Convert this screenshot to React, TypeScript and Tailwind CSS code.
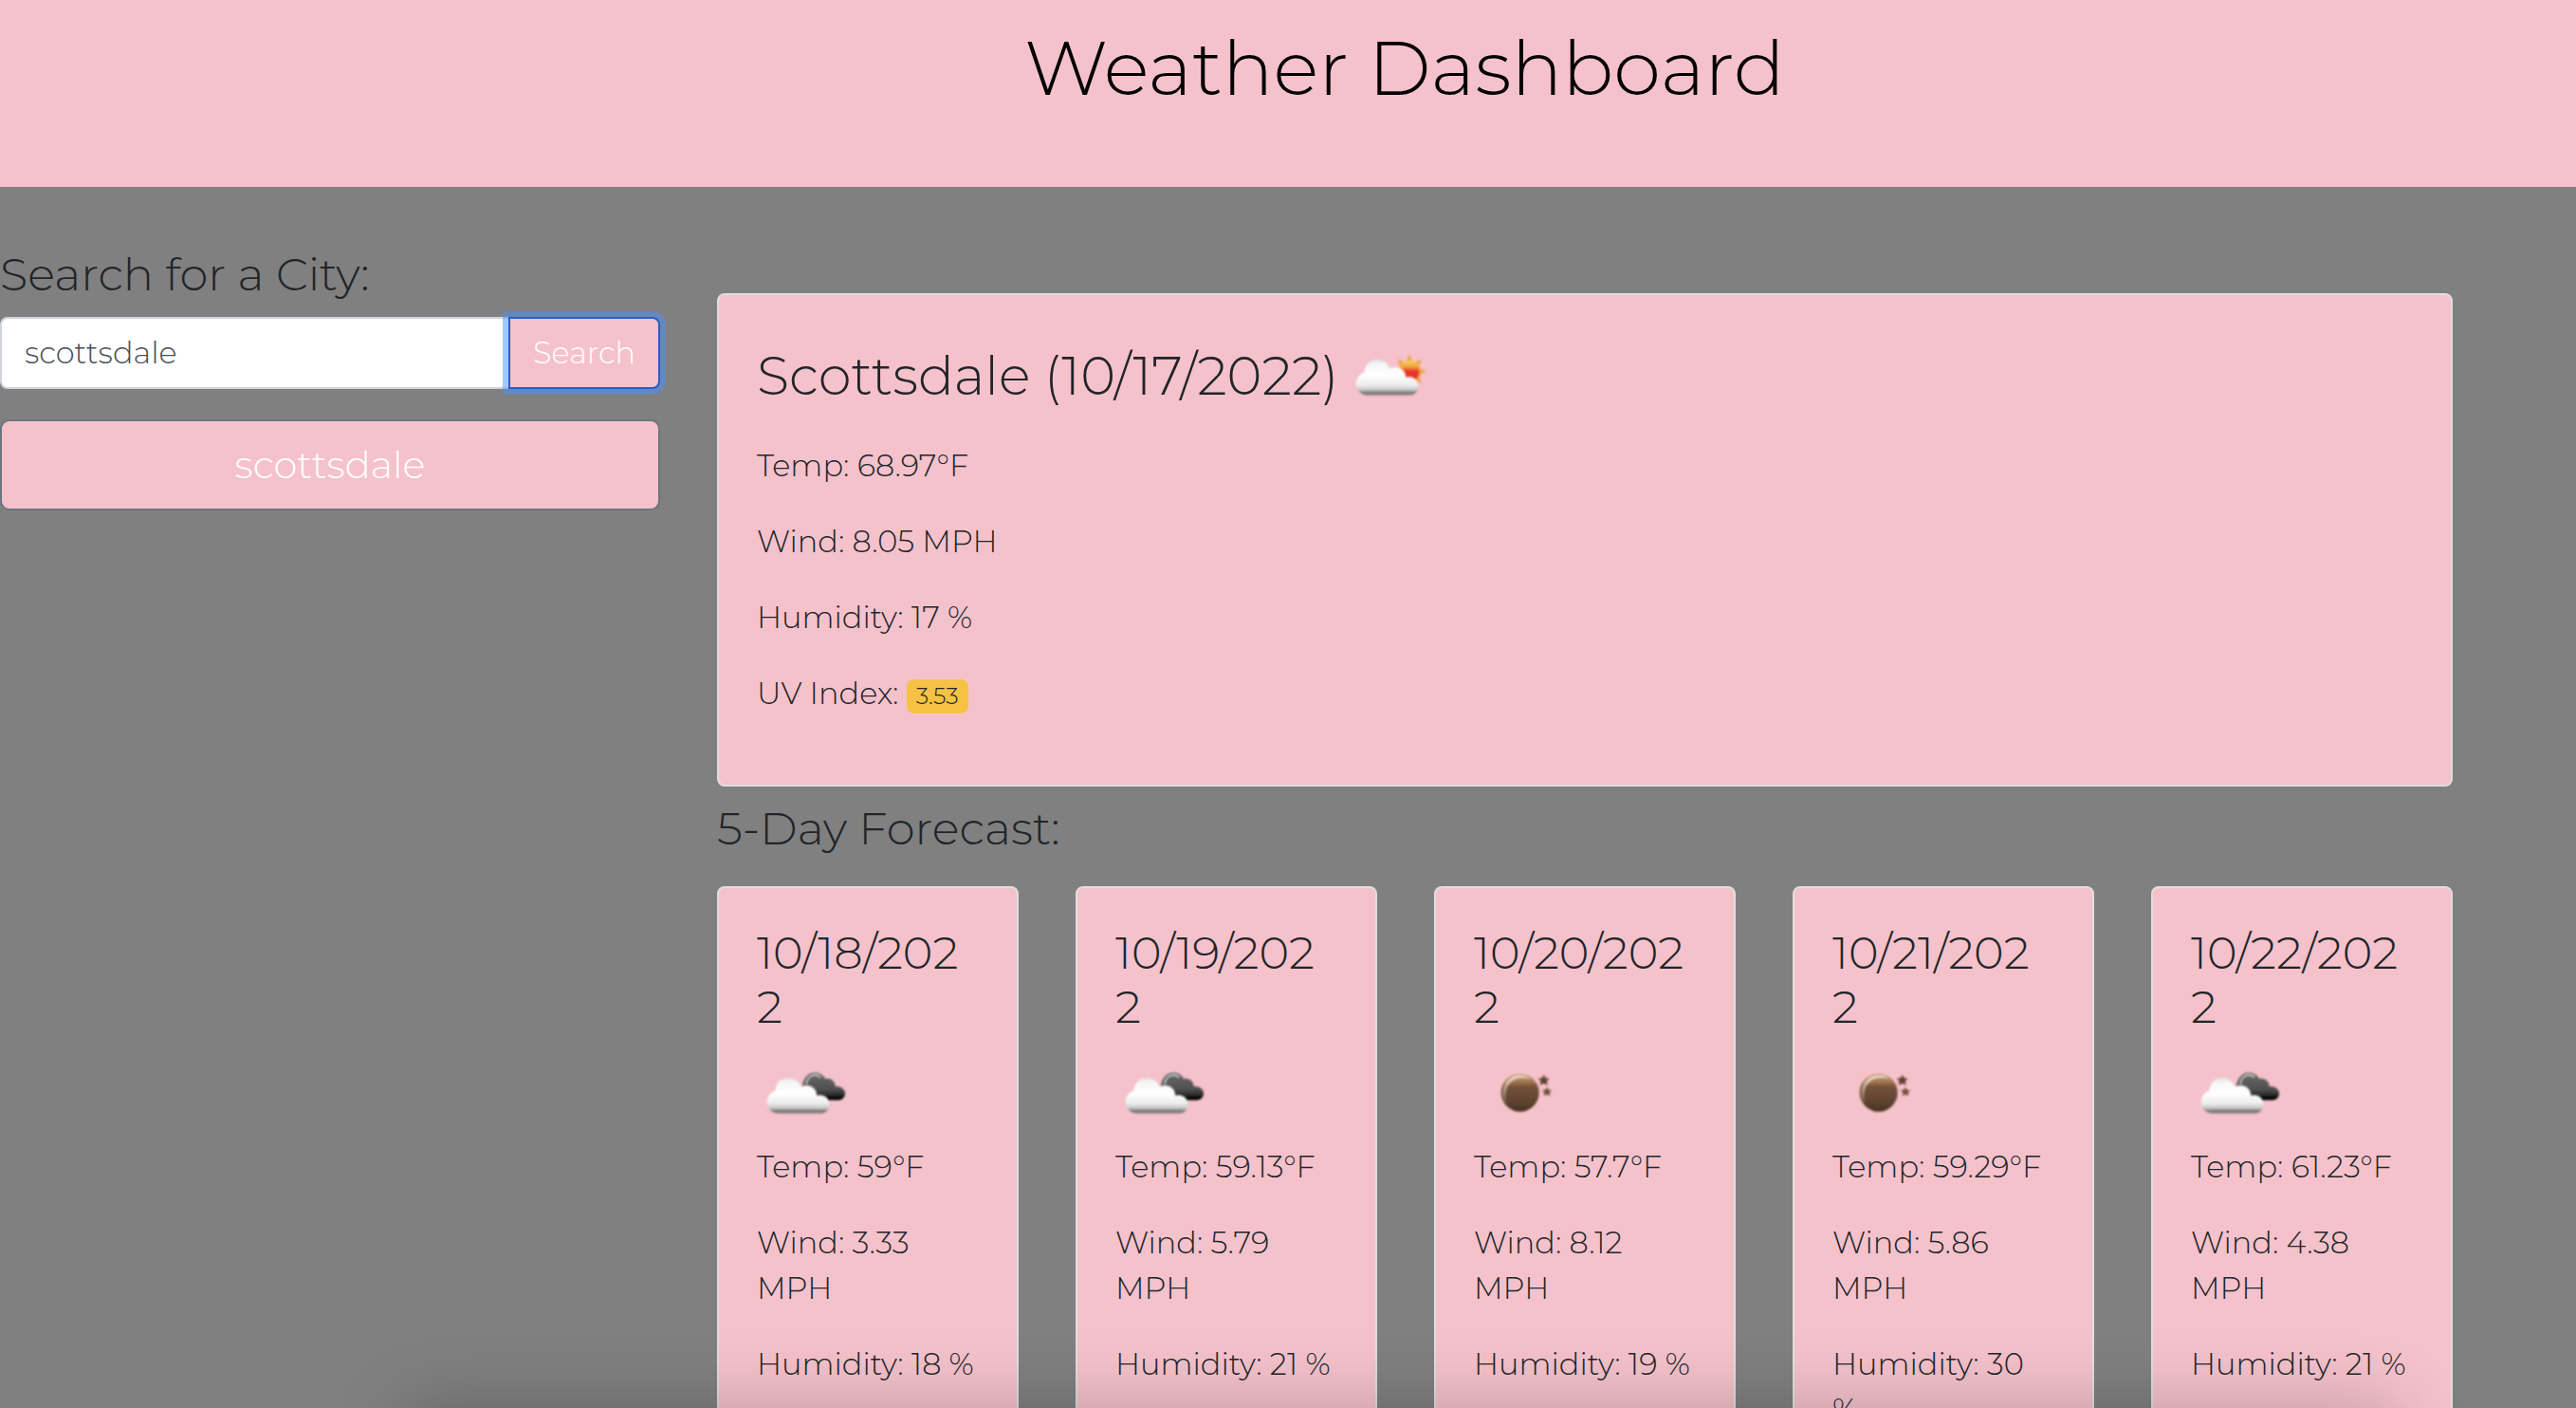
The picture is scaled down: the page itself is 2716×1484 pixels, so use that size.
import React, { useState } from "react";

type IconKind = "few" | "broken" | "night";

interface Day {
  date: string;
  icon: IconKind;
  temp: string;
  wind: string;
  humidity: string;
}

const today = {
  city: "Scottsdale",
  date: "10/17/2022",
  temp: "68.97",
  wind: "8.05",
  humidity: "17",
  uv: "3.53",
};

const forecast: Day[] = [
  { date: "10/18/2022", icon: "broken", temp: "59", wind: "3.33", humidity: "18" },
  { date: "10/19/2022", icon: "broken", temp: "59.13", wind: "5.79", humidity: "21" },
  { date: "10/20/2022", icon: "night", temp: "57.7", wind: "8.12", humidity: "19" },
  { date: "10/21/2022", icon: "night", temp: "59.29", wind: "5.86", humidity: "30" },
  { date: "10/22/2022", icon: "broken", temp: "61.23", wind: "4.38", humidity: "21" },
];

/* Gradients and outlines shared by every weather icon. */
function IconDefs() {
  return (
    <svg width="0" height="0" className="absolute" aria-hidden="true">
      <defs>
        <linearGradient id="cloud-fill" gradientUnits="userSpaceOnUse" x1="0" y1="29" x2="0" y2="68">
          <stop offset="0" stopColor="#dedede" />
          <stop offset="0.15" stopColor="#f6f6f6" />
          <stop offset="0.45" stopColor="#ffffff" />
          <stop offset="0.72" stopColor="#ececec" />
          <stop offset="0.84" stopColor="#c8c8c8" />
          <stop offset="0.94" stopColor="#6e6e6e" />
          <stop offset="1" stopColor="#9a8a8d" />
        </linearGradient>
        <linearGradient id="dark-fill" gradientUnits="userSpaceOnUse" x1="0" y1="24" x2="0" y2="54">
          <stop offset="0" stopColor="#6a6a6a" />
          <stop offset="0.6" stopColor="#505050" />
          <stop offset="0.8" stopColor="#2c2c2c" />
          <stop offset="0.92" stopColor="#000000" />
          <stop offset="1" stopColor="#000000" />
        </linearGradient>
        <linearGradient id="sun-fill" x1="0" y1="0" x2="0" y2="1">
          <stop offset="0" stopColor="#f6d472" />
          <stop offset="0.3" stopColor="#f2a63c" />
          <stop offset="1" stopColor="#ee8a34" />
        </linearGradient>
        <linearGradient id="sun-core" x1="0" y1="0" x2="0" y2="1">
          <stop offset="0" stopColor="#f5c455" />
          <stop offset="0.25" stopColor="#f09a3a" />
          <stop offset="0.45" stopColor="#e9382a" />
          <stop offset="1" stopColor="#e92a22" />
        </linearGradient>
        <linearGradient id="moon-fill" x1="0" y1="0" x2="0" y2="1">
          <stop offset="0" stopColor="#c9a283" />
          <stop offset="0.22" stopColor="#a0744f" />
          <stop offset="0.34" stopColor="#75523a" />
          <stop offset="0.75" stopColor="#5d4230" />
          <stop offset="1" stopColor="#49321f" />
        </linearGradient>
        <linearGradient id="moon-shine" x1="0" y1="0" x2="0" y2="1">
          <stop offset="0" stopColor="#f1e6da" stopOpacity="0.9" />
          <stop offset="1" stopColor="#f1e6da" stopOpacity="0.1" />
        </linearGradient>
        <filter id="soften" x="-10%" y="-10%" width="120%" height="120%" colorInterpolationFilters="sRGB">
          <feGaussianBlur stdDeviation="0.8" />
        </filter>
      </defs>
    </svg>
  );
}

const CLOUD =
  "M23 67.5C16 67.5 10.7 62 10.7 55C10.7 50 14 45.5 19.5 43.5C19.5 36 25.5 30 33 30C39.5 30 44.5 33.5 46.2 39.5C48 38.6 50 38 52.5 38C58.5 38 63 42.3 63.3 48.7C64.5 48.3 65.8 48.2 67 48.2C72.5 48.2 76.5 52.5 76.5 58C76.5 63.5 72.5 67.5 67.5 67.5Z";
const DARK_CLOUD =
  "M48 38C49.5 30 54 24.5 61 24.5C66 24.5 70 27 72 31C77 29.5 82.5 33 82.8 39C88.5 38.5 93 42 93 46.5C93 50.5 90 53.5 86 53.5H56Z";
const RAYS = Array.from({ length: 8 }, (_, i) => i * 45);

function WeatherIcon({ kind }: { kind: IconKind }) {
  return (
    <svg viewBox="0 0 100 100" className="inline-block size-25 align-middle" aria-hidden="true">
      <g filter="url(#soften)">
        {kind === "few" && (
          <g transform="translate(-8 -1)">
            {RAYS.map((angle) => (
              <path
                key={angle}
                d="M68 23.8L71.8 31.4H64.2Z"
                fill="#f0a040"
                transform={`rotate(${angle} 68 41.5)`}
              />
            ))}
            <circle cx="68" cy="41.5" r="12" fill="url(#sun-fill)" />
            <circle cx="68.5" cy="42" r="9.6" fill="url(#sun-core)" />
            <g transform="translate(1 -1)">
              <path d={CLOUD} fill="url(#cloud-fill)" />
            </g>
          </g>
        )}
        {kind === "broken" && (
          <>
            <path d={DARK_CLOUD} fill="url(#dark-fill)" />
            <path
              d="M52 37C52.5 31 56.5 27 61 27C63.5 27 65.8 28 67 29.6"
              fill="none"
              stroke="#c9c9c9"
              strokeWidth="1.8"
            />
            <path d={CLOUD} fill="url(#cloud-fill)" />
          </>
        )}
        {kind === "night" && (
          <>
            <circle cx="48.7" cy="45.7" r="20" fill="url(#moon-fill)" />
            <path
              d="M30.5 50C29.5 36 38 27.5 48 27.5C53 27.5 57 29 60 31.5C51 28.8 44 30 39.5 34C35 38 33 43 33.8 52C34 55 34 56 34 57C32 55 31 53 30.5 50Z"
              fill="url(#moon-shine)"
            />
            <path
              d="M73.7 27.4L75.5 30.8L79 31.1L76.4 33.5L77.2 37.2L73.7 35.4L70.2 37.2L71 33.5L68.4 31.1L71.9 30.8Z"
              fill="#5f4030"
              stroke="#5f4030"
              strokeWidth="0.8"
            />
            <path
              d="M77 40.2L78.5 43.1L81.6 43.4L79.3 45.5L80 48.7L77 47.1L74 48.7L74.7 45.5L72.4 43.4L75.5 43.1Z"
              fill="#6e4e3c"
              stroke="#6e4e3c"
              strokeWidth="0.6"
            />
          </>
        )}
      </g>
    </svg>
  );
}

function SearchPanel() {
  const [city, setCity] = useState("scottsdale");
  return (
    <aside className="w-[696px] shrink-0">
      <form onSubmit={(e) => e.preventDefault()}>
        <label htmlFor="city" className="mb-4 block text-[48px] leading-[58px]">
          Search for a City:
        </label>
        <div className="flex">
          <input
            id="city"
            type="text"
            value={city}
            onChange={(e) => setCity(e.target.value)}
            className="min-w-0 flex-1 rounded-l-lg border-2 border-[#ced4da] bg-white px-6 py-3 text-[32px] leading-[48px] text-[#495057] outline-none"
          />
          <button
            type="submit"
            className="-ml-0.5 rounded-r-lg border-2 border-[#2a5fc8] bg-[#f5c2cb] px-6 py-3 text-[32px] leading-[48px] text-white shadow-[0_0_0_6px_rgba(78,143,245,0.5)]"
          >
            Search
          </button>
        </div>
      </form>
      <button
        type="button"
        className="mt-8 w-full rounded-[10px] border-2 border-[#6c757d] bg-[#f5c2cb] px-8 py-4 text-[40px] leading-[60px] text-white"
      >
        scottsdale
      </button>
    </aside>
  );
}

function DayCard({ day }: { day: Day }) {
  return (
    <article className="min-w-0 rounded-lg border-2 border-[#dfdfdf] bg-[#f5c2cb] p-10">
      <h3 className="mb-4 text-[48px] leading-[57px] wrap-anywhere">{day.date}</h3>
      <div className="flex">
        <WeatherIcon kind={day.icon} />
      </div>
      <p className="mb-8">Temp: {day.temp}°F</p>
      <p className="mb-8">Wind: {day.wind} MPH</p>
      <p className="mb-8">Humidity: {day.humidity} %</p>
    </article>
  );
}

export default function App() {
  return (
    <div className="relative h-screen overflow-hidden bg-[#808080] font-['Montserrat','Inter',sans-serif] text-[32px] leading-[48px] font-light text-[#212529]">
      <IconDefs />
      <header className="bg-[#f5c2cb] pt-6 pb-[77px] pl-[246px] text-center text-black">
        <h1 className="text-[80px] leading-[96px]">Weather Dashboard</h1>
      </header>

      <div className="flex items-start gap-15 pt-[63px] pr-[130px]">
        <SearchPanel />

        <main className="min-w-0 flex-1 pt-[49px]">
          <section className="rounded-lg border-2 border-[#dfdfdf] bg-[#f5c2cb] p-10">
            <h2 className="mb-4 text-[56px] leading-[67px]">
              {today.city} ({today.date}) <WeatherIcon kind="few" />
            </h2>
            <p className="mb-8">Temp: {today.temp}°F</p>
            <p className="mb-8">Wind: {today.wind} MPH</p>
            <p className="mb-8">Humidity: {today.humidity} %</p>
            <p className="mb-8">
              UV Index:{" "}
              <span className="inline-block rounded-lg bg-[#f6c244] px-2.5 py-1.5 align-baseline text-[24px] leading-6">
                {today.uv}
              </span>
            </p>
          </section>

          <h2 className="mt-[15px] mb-8 text-[48px] leading-[58px]">5-Day Forecast:</h2>

          <section className="grid grid-cols-5 gap-15">
            {forecast.map((day) => (
              <DayCard key={day.date} day={day} />
            ))}
          </section>
        </main>
      </div>

      <div className="pointer-events-none absolute top-full right-[185px] left-[425px] h-40 rounded-3xl shadow-[0_0_80px_rgba(0,0,0,0.23)]" />
    </div>
  );
}
